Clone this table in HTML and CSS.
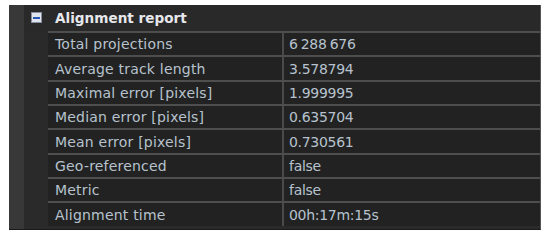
FILE: index.html
```html
<!DOCTYPE html>
<html>
<head>
<meta charset="utf-8">
<link rel="stylesheet" href="styles.css">
</head>
<body>
<div class="panel">
  <div class="strip"></div>
  <div class="main">
    <div class="header">
      <span class="toggle"><span class="minus"></span></span>
      <span class="title">Alignment report</span>
    </div>
    <div class="rows">
      <div class="row"><div class="k">Total projections</div><div class="v">6 288 676</div></div>
      <div class="row"><div class="k">Average track length</div><div class="v">3.578794</div></div>
      <div class="row"><div class="k">Maximal error [pixels]</div><div class="v">1.999995</div></div>
      <div class="row"><div class="k">Median error [pixels]</div><div class="v">0.635704</div></div>
      <div class="row"><div class="k">Mean error [pixels]</div><div class="v">0.730561</div></div>
      <div class="row"><div class="k">Geo-referenced</div><div class="v">false</div></div>
      <div class="row"><div class="k">Metric</div><div class="v">false</div></div>
      <div class="row"><div class="k">Alignment time</div><div class="v">00h:17m:15s</div></div>
    </div>
  </div>
</div>
</body>
</html>
```
FILE: styles.css
```css
html, body {
  margin: 0;
  padding: 0;
  background: #ffffff;
}
body {
  padding: 5px 9px 0 9px;
  font-family: "DejaVu Sans", Verdana, sans-serif;
}
.panel {
  width: 532px;
  height: 225px;
  display: flex;
  background: #2a2a2a;
  border-right: 1px solid #555;
  border-bottom: 1px solid #1a1a1a;
  box-sizing: border-box;
}
.strip {
  width: 15px;
  background: #383838;
  flex: none;
}
.main {
  flex: 1;
  display: flex;
  flex-direction: column;
}
.header {
  height: 26px;
  display: flex;
  align-items: center;
  background: #292929;
}
.toggle {
  width: 11px;
  height: 11px;
  margin-left: 7px;
  margin-right: 13px;
  margin-top: -1px;
  box-sizing: border-box;
  background: #dfe3ec;
  border: 1px solid #8a90a0;
  display: flex;
  align-items: center;
  justify-content: center;
}
.minus {
  width: 7px;
  height: 2px;
  background: #2a55b8;
}
.title {
  color: #e6e8ec;
  font-weight: bold;
  font-size: 13.6px;
}
.rows {
  margin-left: 24px;
}
.row {
  height: 24.35px;
  box-sizing: border-box;
  border-top: 2px solid #4e4e4e;
  background: #222222;
  display: grid;
  grid-template-columns: 234px 1fr;
  align-items: center;
  font-size: 14px;
  color: #b7c2ce;
}
.k {
  padding-left: 7px;
  height: 100%;
  display: flex;
  align-items: center;
  letter-spacing: 0.2px;
}
.v {
  padding-left: 5px;
  height: 100%;
  display: flex;
  align-items: center;
  border-left: 2px solid #4a4a4a;
  letter-spacing: -0.3px;
  word-spacing: -1px;
}
```
